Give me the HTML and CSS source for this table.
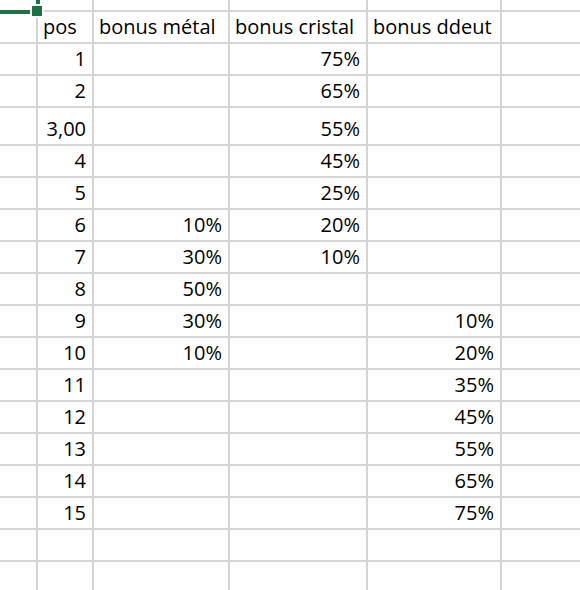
FILE: index.html
```html
<!DOCTYPE html>
<html lang="fr">
<head>
<meta charset="utf-8">
<link rel="stylesheet" href="styles.css">
</head>
<body>
<div class="sheet">
  <div class="row top"><div class="c c0"></div><div class="c ca"></div><div class="c cb"></div><div class="c cc"></div><div class="c cd"></div><div class="c ce"></div></div>
  <div class="row"><div class="c c0"></div><div class="c ca">pos</div><div class="c cb">bonus métal</div><div class="c cc">bonus cristal</div><div class="c cd">bonus ddeut</div><div class="c ce"></div></div>
  <div class="row"><div class="c c0"></div><div class="c ca n">1</div><div class="c cb n"></div><div class="c cc n">75%</div><div class="c cd n"></div><div class="c ce"></div></div>
  <div class="row"><div class="c c0"></div><div class="c ca n">2</div><div class="c cb n"></div><div class="c cc n">65%</div><div class="c cd n"></div><div class="c ce"></div></div>
  <div class="row tall"><div class="c c0"></div><div class="c ca n">3,00</div><div class="c cb n"></div><div class="c cc n">55%</div><div class="c cd n"></div><div class="c ce"></div></div>
  <div class="row"><div class="c c0"></div><div class="c ca n">4</div><div class="c cb n"></div><div class="c cc n">45%</div><div class="c cd n"></div><div class="c ce"></div></div>
  <div class="row"><div class="c c0"></div><div class="c ca n">5</div><div class="c cb n"></div><div class="c cc n">25%</div><div class="c cd n"></div><div class="c ce"></div></div>
  <div class="row"><div class="c c0"></div><div class="c ca n">6</div><div class="c cb n">10%</div><div class="c cc n">20%</div><div class="c cd n"></div><div class="c ce"></div></div>
  <div class="row"><div class="c c0"></div><div class="c ca n">7</div><div class="c cb n">30%</div><div class="c cc n">10%</div><div class="c cd n"></div><div class="c ce"></div></div>
  <div class="row"><div class="c c0"></div><div class="c ca n">8</div><div class="c cb n">50%</div><div class="c cc n"></div><div class="c cd n"></div><div class="c ce"></div></div>
  <div class="row"><div class="c c0"></div><div class="c ca n">9</div><div class="c cb n">30%</div><div class="c cc n"></div><div class="c cd n">10%</div><div class="c ce"></div></div>
  <div class="row"><div class="c c0"></div><div class="c ca n">10</div><div class="c cb n">10%</div><div class="c cc n"></div><div class="c cd n">20%</div><div class="c ce"></div></div>
  <div class="row"><div class="c c0"></div><div class="c ca n">11</div><div class="c cb n"></div><div class="c cc n"></div><div class="c cd n">35%</div><div class="c ce"></div></div>
  <div class="row"><div class="c c0"></div><div class="c ca n">12</div><div class="c cb n"></div><div class="c cc n"></div><div class="c cd n">45%</div><div class="c ce"></div></div>
  <div class="row"><div class="c c0"></div><div class="c ca n">13</div><div class="c cb n"></div><div class="c cc n"></div><div class="c cd n">55%</div><div class="c ce"></div></div>
  <div class="row"><div class="c c0"></div><div class="c ca n">14</div><div class="c cb n"></div><div class="c cc n"></div><div class="c cd n">65%</div><div class="c ce"></div></div>
  <div class="row"><div class="c c0"></div><div class="c ca n">15</div><div class="c cb n"></div><div class="c cc n"></div><div class="c cd n">75%</div><div class="c ce"></div></div>
  <div class="row"><div class="c c0"></div><div class="c ca"></div><div class="c cb"></div><div class="c cc"></div><div class="c cd"></div><div class="c ce"></div></div>
  <div class="row"><div class="c c0"></div><div class="c ca"></div><div class="c cb"></div><div class="c cc"></div><div class="c cd"></div><div class="c ce"></div></div>

  <div class="sel-h"></div>
  <div class="sel-v"></div>
  <div class="handle"></div>
</div>
</body>
</html>
```

FILE: styles.css
```css
html, body {
  margin: 0;
  padding: 0;
  background: #ffffff;
  overflow: hidden;
}

.sheet {
  position: relative;
  width: 580px;
  height: 590px;
  overflow: hidden;
  font-family: "Open Sans", "Liberation Sans", sans-serif;
  font-size: 20px;
  color: #000000;
}

.row {
  display: flex;
  height: 32px;
}

.row.top {
  height: 12px;
}

.row.tall {
  height: 38px;
}

.c {
  box-sizing: border-box;
  flex: none;
  height: 100%;
  border-right: 2px solid #d5d5d5;
  border-bottom: 2px solid #d5d5d5;
  padding: 0 5px 5px 5px;
  display: flex;
  align-items: flex-end;
  justify-content: flex-start;
  line-height: 20px;
  white-space: nowrap;
  overflow: hidden;
}

.c.n {
  justify-content: flex-end;
  padding-right: 6px;
}

.c0 { width: 38px; }
.ca { width: 56px; }
.cb { width: 136px; }
.cc { width: 138px; }
.cd { width: 134px; }
.ce { width: 120px; }

.sel-h {
  position: absolute;
  left: 0;
  top: 10px;
  width: 30px;
  height: 4px;
  background: #1e7145;
}

.sel-v {
  position: absolute;
  left: 36px;
  top: 0;
  width: 4px;
  height: 4px;
  background: #1e7145;
}

.handle {
  position: absolute;
  left: 30px;
  top: 4px;
  width: 10px;
  height: 10px;
  border: 2px solid #ffffff;
  background: #1e7145;
}
```
